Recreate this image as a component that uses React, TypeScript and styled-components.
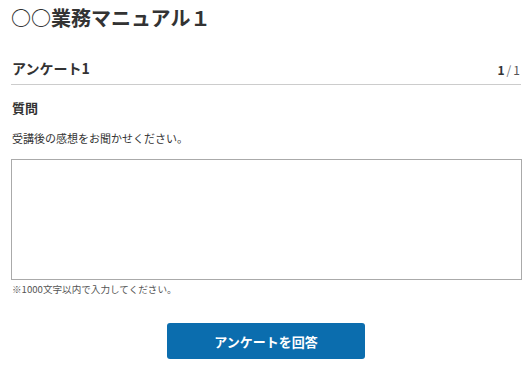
import React, { useState } from "react";
import styled, { createGlobalStyle } from "styled-components";

const GlobalStyle = createGlobalStyle`
  html, body {
    margin: 0;
    padding: 0;
    background: #fff;
  }
  body {
    font-family: "Noto Sans CJK JP", "Noto Sans", sans-serif;
    color: #333;
  }
`;

const Page = styled.div`
  padding: 4px 11px 0 11px;
  width: 510px;
`;

const Title = styled.h1`
  margin: 0;
  font-size: 20px;
  line-height: 28px;
  font-weight: 700;
  color: #333;
`;

const SurveyHeader = styled.div`
  display: flex;
  align-items: flex-end;
  justify-content: space-between;
  margin-top: 26px;
  padding: 0 1px 6px 1px;
  border-bottom: 1px solid #cccccc;
`;

const SurveyTitle = styled.h2`
  margin: 0;
  font-size: 14px;
  line-height: 20px;
  font-weight: 700;
`;

const Pager = styled.span`
  font-size: 12px;
  line-height: 16px;
  color: #555;
  b {
    color: #333;
    font-weight: 700;
  }
  i {
    font-style: normal;
    margin: 0 2px;
    color: #777;
  }
`;

const QuestionLabel = styled.h3`
  margin: 13px 0 0 1px;
  font-size: 13px;
  line-height: 20px;
  font-weight: 700;
`;

const QuestionText = styled.p`
  margin: 12px 0 0 1px;
  font-size: 11px;
  line-height: 16px;
`;

const Answer = styled.textarea`
  display: block;
  box-sizing: border-box;
  width: 511px;
  height: 121px;
  margin-top: 13px;
  border: 1px solid #aaaaaa;
  border-radius: 0;
  resize: none;
  padding: 6px;
  font-family: inherit;
  font-size: 12px;
  outline: none;
`;

const Note = styled.p`
  margin: 2px 0 0 1px;
  font-size: 9.6px;
  line-height: 14px;
  color: #555;
`;

const Actions = styled.div`
  display: flex;
  justify-content: center;
  margin-top: 27px;
`;

const SubmitButton = styled.button`
  width: 198px;
  height: 36px;
  border: none;
  border-radius: 3px;
  background: #0b6dae;
  color: #fff;
  font-family: inherit;
  font-size: 13px;
  font-weight: 700;
  cursor: pointer;
`;

const App: React.FC = () => {
  const [answer, setAnswer] = useState("");

  return (
    <>
      <GlobalStyle />
      <Page>
        <Title>○○業務マニュアル１</Title>
        <SurveyHeader>
          <SurveyTitle>アンケート1</SurveyTitle>
          <Pager>
            <b>1</b>
            <i>/</i>1
          </Pager>
        </SurveyHeader>
        <QuestionLabel>質問</QuestionLabel>
        <QuestionText>受講後の感想をお聞かせください。</QuestionText>
        <Answer
          value={answer}
          maxLength={1000}
          onChange={(e) => setAnswer(e.target.value)}
        />
        <Note>※1000文字以内で入力してください。</Note>
        <Actions>
          <SubmitButton>アンケートを回答</SubmitButton>
        </Actions>
      </Page>
    </>
  );
};

export default App;
